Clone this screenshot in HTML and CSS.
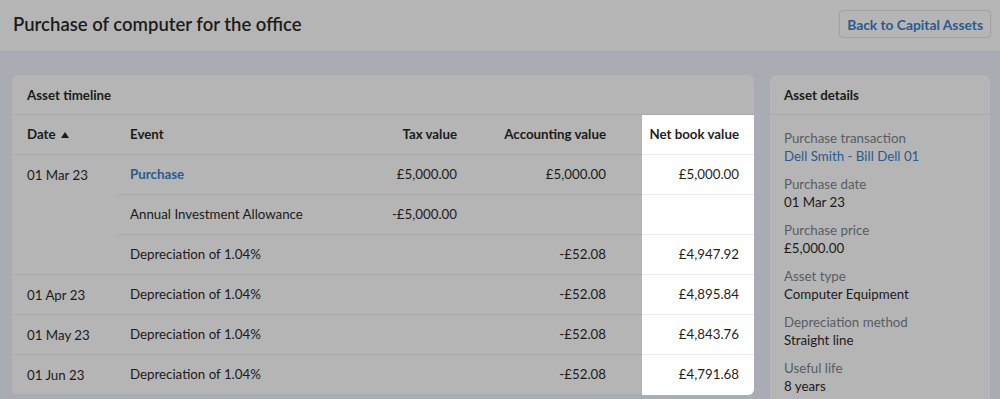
FILE: index.html
```html
<!DOCTYPE html>
<html lang="en">
<head>
<meta charset="utf-8">
<title>Purchase of computer for the office</title>
<link rel="stylesheet" href="styles.css">
</head>
<body>
<header class="topbar">
  <h1 class="page-title">Purchase of computer for the office</h1>
  <button class="back-btn">Back to Capital Assets</button>
</header>
<main class="content">
  <section class="card timeline">
    <h2 class="card-title">Asset timeline</h2>
    <table class="tl-table">
      <colgroup>
        <col class="c-date"><col class="c-event"><col class="c-tax"><col class="c-acc"><col class="c-nbv">
      </colgroup>
      <thead>
        <tr>
          <th class="date">Date <svg class="sort" width="8" height="6" viewBox="0 0 8 6"><path d="M0 6 L4 0 L8 6 Z" fill="#1b1b1b"/></svg></th>
          <th class="event">Event</th>
          <th class="num">Tax value</th>
          <th class="num acc">Accounting value</th>
          <th class="num nbv">Net book value</th>
        </tr>
      </thead>
      <tbody>
        <tr>
          <td class="date" rowspan="3">01 Mar 23</td>
          <td class="event"><a class="link" href="#">Purchase</a></td>
          <td class="num">£5,000.00</td>
          <td class="num acc">£5,000.00</td>
          <td class="num nbv">£5,000.00</td>
        </tr>
        <tr>
          <td class="event">Annual Investment Allowance</td>
          <td class="num">-£5,000.00</td>
          <td class="num acc"></td>
          <td class="num nbv"></td>
        </tr>
        <tr>
          <td class="event">Depreciation of 1.04%</td>
          <td class="num"></td>
          <td class="num acc">-£52.08</td>
          <td class="num nbv">£4,947.92</td>
        </tr>
        <tr>
          <td class="date">01 Apr 23</td>
          <td class="event">Depreciation of 1.04%</td>
          <td class="num"></td>
          <td class="num acc">-£52.08</td>
          <td class="num nbv">£4,895.84</td>
        </tr>
        <tr>
          <td class="date">01 May 23</td>
          <td class="event">Depreciation of 1.04%</td>
          <td class="num"></td>
          <td class="num acc">-£52.08</td>
          <td class="num nbv">£4,843.76</td>
        </tr>
        <tr>
          <td class="date">01 Jun 23</td>
          <td class="event">Depreciation of 1.04%</td>
          <td class="num"></td>
          <td class="num acc">-£52.08</td>
          <td class="num nbv">£4,791.68</td>
        </tr>
      </tbody>
    </table>
  </section>
  <aside class="card details">
    <h2 class="card-title">Asset details</h2>
    <dl class="detail-list">
      <div class="item"><dt>Purchase transaction</dt><dd><a class="link plain" href="#">Dell Smith - Bill Dell 01</a></dd></div>
      <div class="item"><dt>Purchase date</dt><dd>01 Mar 23</dd></div>
      <div class="item"><dt>Purchase price</dt><dd>£5,000.00</dd></div>
      <div class="item"><dt>Asset type</dt><dd>Computer Equipment</dd></div>
      <div class="item"><dt>Depreciation method</dt><dd>Straight line</dd></div>
      <div class="item"><dt>Useful life</dt><dd>8 years</dd></div>
    </dl>
  </aside>
</main>
</body>
</html>
```
FILE: styles.css
```css
* { box-sizing: border-box; }
html, body { margin: 0; padding: 0; }
body {
  width: 1000px;
  height: 399px;
  overflow: hidden;
  background: #a9adb3;
  font-family: Lato, "Liberation Sans", sans-serif;
  color: #1b1b1b;
  font-size: 13.3px;
}
.topbar {
  height: 52px;
  background: #b5b5b5;
  border-bottom: 1px solid #a6a7a9;
  display: flex;
  align-items: center;
  justify-content: space-between;
  padding: 0 9px 3px 13px;
}
.page-title {
  margin: 0;
  font-size: 18.5px;
  font-weight: 600;
  color: #1b1b1b;
}
.back-btn {
  height: 28px;
  padding: 0 7px;
  border: 1px solid #a0a1a3;
  border-radius: 4px;
  background: #b5b5b5;
  color: #2b5a8e;
  font-family: inherit;
  font-size: 13.8px;
  font-weight: 700;
}
.content {
  display: flex;
  gap: 16px;
  padding: 23px 10px 0 12px;
  align-items: flex-start;
}
.card {
  background: #b5b5b5;
  border-radius: 6px;
  overflow: hidden;
}
.timeline { width: 742px; flex: none; }
.details { width: 220px; flex: none; height: 340px; }
.card-title {
  margin: 0;
  height: 40px;
  display: flex;
  align-items: center;
  padding-left: 15px;
  font-size: 13.3px;
  font-weight: 700;
  border-bottom: 1px solid #aaaaaa;
}
.details .card-title { padding-left: 14px; }
.tl-table {
  width: 742px;
  border-collapse: collapse;
  table-layout: fixed;
}
.c-date { width: 105px; }
.c-event { width: 203px; }
.c-tax { width: 151px; }
.c-acc { width: 171px; }
.c-nbv { width: 112px; }
.tl-table th, .tl-table td {
  height: 40px;
  padding: 0 14px;
  border-bottom: 1px solid #aaaaaa;
  font-size: 13.3px;
  white-space: nowrap;
  vertical-align: middle;
}
.tl-table th { font-weight: 700; height: 39px; text-align: left; }
.tl-table .date { padding-left: 15px; vertical-align: top; padding-top: 12px; }
.tl-table th.date { vertical-align: middle; padding-top: 0; }
.tl-table .event { padding-left: 13px; }
.tl-table .num { text-align: right; }
.tl-table .acc { padding-right: 36px; }
.tl-table .nbv { background: #ffffff; color: #1f1f1f; border-bottom-color: #ececec; padding-left: 4px; padding-right: 15px; }
.tl-table tbody tr:last-child td.nbv { border-bottom-color: #ffffff; }
.sort { margin-left: 2px; vertical-align: 1px; }
.link { color: #2b5a8e; font-weight: 700; text-decoration: none; }
.link.plain { font-weight: 400; }
.detail-list {
  margin: 0;
  padding: 14px 14px 0 14px;
  display: flex;
  flex-direction: column;
  gap: 10px;
}
.item dt {
  color: #575d65;
  line-height: 18px;
}
.item dd {
  margin: 0;
  line-height: 18px;
}
```
